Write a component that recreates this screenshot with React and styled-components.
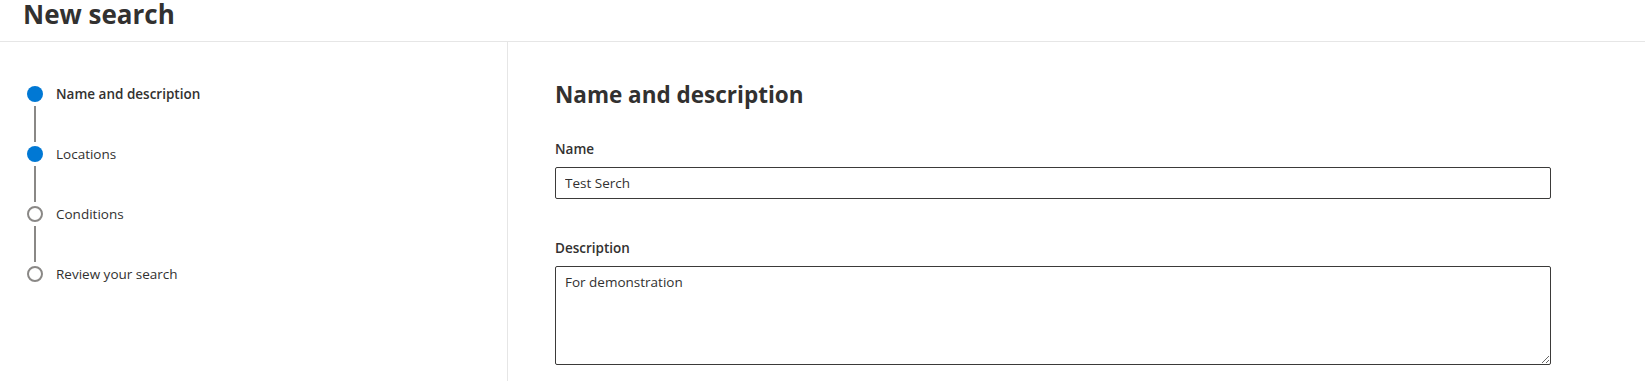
import React from "react";
import styled, { createGlobalStyle } from "styled-components";

const GlobalStyle = createGlobalStyle`
  html, body {
    margin: 0;
    padding: 0;
    background: #ffffff;
    font-family: "Segoe UI", "Open Sans", "Noto Sans", sans-serif;
    color: #323130;
    -webkit-font-smoothing: antialiased;
  }
  * { box-sizing: border-box; }
`;

const Page = styled.div`
  width: 1645px;
  height: 381px;
  display: flex;
  flex-direction: column;
  overflow: hidden;
`;

const Header = styled.header`
  height: 42px;
  flex: none;
  display: flex;
  align-items: flex-start;
  padding: 0 0 0 23px;
  border-bottom: 1px solid #e6e6e6;
`;

const Title = styled.h1`
  margin: 0;
  font-size: 26px;
  font-weight: 700;
  line-height: 28px;
  color: #323130;
`;

const Body = styled.div`
  flex: 1;
  display: flex;
  min-height: 0;
`;

const Nav = styled.nav`
  width: 508px;
  flex: none;
  border-right: 1px solid #e6e6e6;
  padding: 44px 0 0 27px;
`;

const Step = styled.div`
  display: flex;
  flex-direction: column;
`;

const StepRow = styled.div`
  display: flex;
  align-items: center;
  gap: 13px;
  height: 16px;
`;

const Dot = styled.span`
  width: 16px;
  height: 16px;
  border-radius: 50%;
  flex: none;
  background: ${(p) => (p.$done ? "#0078d4" : "#ffffff")};
  border: ${(p) => (p.$done ? "none" : "2px solid #8a8886")};
`;

const StepLabel = styled.span`
  font-size: 13.5px;
  line-height: 16px;
  font-weight: ${(p) => (p.$current ? 600 : 400)};
  color: #323130;
  white-space: nowrap;
`;

const Connector = styled.span`
  width: 2px;
  height: 36px;
  margin: 4px 0 4px 7px;
  background: #8a8886;
`;

const Content = styled.main`
  flex: 1;
  padding: 37px 0 0 47px;
`;

const Heading = styled.h2`
  margin: 0 0 24px;
  font-size: 22.5px;
  font-weight: 700;
  line-height: 32px;
  color: #323130;
`;

const Field = styled.div`
  display: flex;
  flex-direction: column;
  width: 996px;
  margin-bottom: ${(p) => p.$gap || 0}px;
`;

const Label = styled.label`
  font-size: 13.5px;
  font-weight: 600;
  line-height: 20px;
  padding: 4px 0 8px;
  color: #323130;
`;

const Input = styled.input`
  height: 32px;
  width: 100%;
  border: 1px solid #3b3a39;
  border-radius: 2px;
  padding: 0 9px;
  font: inherit;
  font-size: 13.5px;
  color: #323130;
  outline: none;
`;

const TextArea = styled.textarea`
  height: 99px;
  width: 100%;
  border: 1px solid #3b3a39;
  border-radius: 2px;
  padding: 5px 9px;
  font: inherit;
  font-size: 13.5px;
  line-height: 20px;
  color: #323130;
  outline: none;
  resize: vertical;
`;

const steps = [
  { label: "Name and description", done: true, current: true },
  { label: "Locations", done: true },
  { label: "Conditions", done: false },
  { label: "Review your search", done: false },
];

export default function App() {
  return (
    <Page>
      <GlobalStyle />
      <Header>
        <Title>New search</Title>
      </Header>
      <Body>
        <Nav>
          {steps.map((s, i) => (
            <Step key={s.label}>
              <StepRow>
                <Dot $done={s.done} />
                <StepLabel $current={s.current}>{s.label}</StepLabel>
              </StepRow>
              {i < steps.length - 1 && <Connector />}
            </Step>
          ))}
        </Nav>
        <Content>
          <Heading>Name and description</Heading>
          <Field $gap={35}>
            <Label htmlFor="name">Name</Label>
            <Input id="name" defaultValue="Test Serch" />
          </Field>
          <Field>
            <Label htmlFor="desc">Description</Label>
            <TextArea id="desc" defaultValue="For demonstration" />
          </Field>
        </Content>
      </Body>
    </Page>
  );
}
